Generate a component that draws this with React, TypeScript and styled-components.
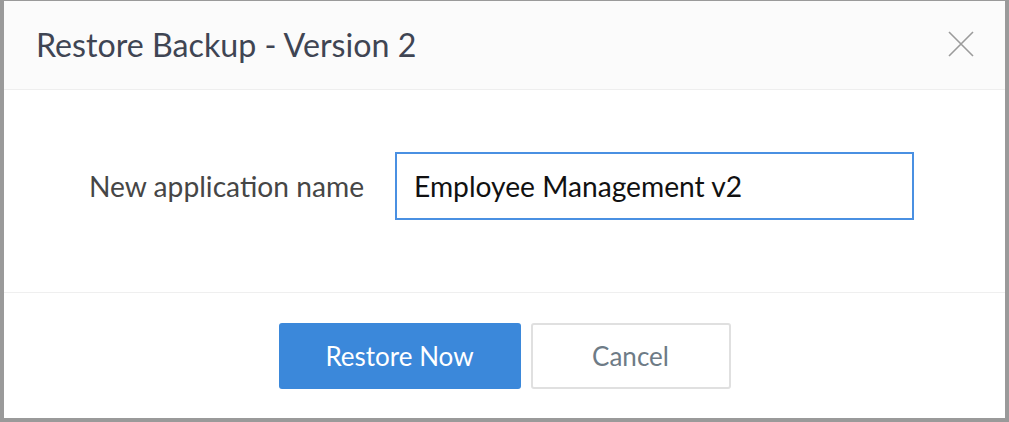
import React from "react";
import styled, { createGlobalStyle } from "styled-components";

const Global = createGlobalStyle`
  html, body { margin: 0; padding: 0; background: #fff; }
  body { font-family: Lato, "Open Sans", sans-serif; }
  * { box-sizing: border-box; }
`;

const Frame = styled.div`
  width: 1009px;
  height: 422px;
  border-style: solid;
  border-color: #9a9a9a;
  border-width: 1px 4px 4px 4px;
  background: #fff;
  display: flex;
  flex-direction: column;
`;

const Header = styled.div`
  height: 89px;
  flex: none;
  background: #fbfbfb;
  border-bottom: 1px solid #eeeeee;
  display: flex;
  align-items: center;
  justify-content: space-between;
  padding: 0 31px 2px 32px;
`;

const Title = styled.h1`
  margin: 0;
  font-family: Lato, sans-serif;
  font-weight: 400;
  font-size: 32.2px;
  color: #3f4553;
`;

const CloseButton = styled.button`
  border: none;
  background: transparent;
  padding: 0;
  width: 26px;
  height: 26px;
  cursor: pointer;
  display: flex;
  align-items: center;
  justify-content: center;
`;

const Body = styled.div`
  height: 203px;
  flex: none;
  border-bottom: 1px solid #efefef;
  display: flex;
  align-items: center;
  padding: 0 0 10px 85px;
`;

const Label = styled.label`
  font-size: 28.2px;
  color: #464646;
  margin-right: 31px;
  white-space: nowrap;
`;

const Input = styled.input`
  width: 519px;
  height: 68px;
  border: 2px solid #4a90e2;
  padding: 0 17px;
  font-family: Lato, sans-serif;
  font-size: 28.2px;
  color: #111;
  outline: none;
  background: #fff;
`;

const Footer = styled.div`
  flex: 1;
  display: flex;
  justify-content: center;
  align-items: flex-start;
  padding-top: 30px;
  gap: 10px;
`;

const Button = styled.button<{ $primary?: boolean }>`
  height: 66px;
  width: ${(p) => (p.$primary ? "242px" : "200px")};
  border-radius: 3px;
  font-family: Lato, sans-serif;
  font-size: 26px;
  cursor: pointer;
  border: ${(p) => (p.$primary ? "none" : "2px solid #e0e0e0")};
  background: ${(p) => (p.$primary ? "#3b88da" : "#fff")};
  color: ${(p) => (p.$primary ? "#fff" : "#6e7b86")};
`;

export default function App() {
  return (
    <>
      <Global />
      <Frame>
        <Header>
          <Title>Restore Backup - Version 2</Title>
          <CloseButton aria-label="Close">
            <svg width="26" height="26" viewBox="0 0 26 26">
              <path d="M1 1 L25 25 M25 1 L1 25" stroke="#9b9b9b" strokeWidth="1.6" fill="none" />
            </svg>
          </CloseButton>
        </Header>
        <Body>
          <Label>New application name</Label>
          <Input defaultValue="Employee Management v2" />
        </Body>
        <Footer>
          <Button $primary>Restore Now</Button>
          <Button>Cancel</Button>
        </Footer>
      </Frame>
    </>
  );
}
